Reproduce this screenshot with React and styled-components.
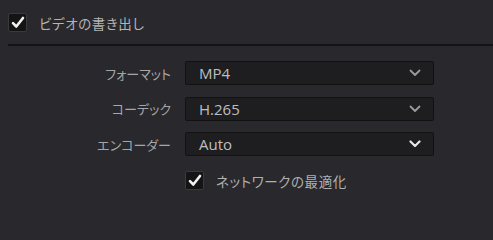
import React from "react";
import styled, { createGlobalStyle } from "styled-components";

const GlobalStyle = createGlobalStyle`
  html, body {
    margin: 0;
    padding: 0;
    background: #28282d;
  }
`;

const Page = styled.div`
  width: 493px;
  height: 205px;
  background: #28282d;
  font-family: "Noto Sans CJK JP", "Noto Sans", sans-serif;
  font-feature-settings: "palt";
  overflow: hidden;
`;

const Header = styled.div`
  display: flex;
  align-items: center;
  gap: 12px;
  height: 44px;
  padding-left: 8px;
  padding-top: 1px;
  box-sizing: border-box;
`;

const Title = styled.span`
  font-size: 13.5px;
  color: #b4b4b6;
  letter-spacing: 0.6px;
`;

const Divider = styled.div`
  margin-left: 8px;
  height: 2px;
  background: #141416;
`;

const Form = styled.div`
  display: grid;
  grid-template-columns: 171px 249px;
  grid-auto-rows: 24px;
  column-gap: 14px;
  row-gap: 11.5px;
  padding-top: 15px;
`;

const Label = styled.div`
  display: flex;
  align-items: center;
  justify-content: flex-end;
  font-size: 13px;
  color: #a6a6a8;
`;

const Select = styled.div`
  display: flex;
  align-items: center;
  justify-content: space-between;
  box-sizing: border-box;
  padding: 0 12px 0 13px;
  background: #1e1e20;
  border: 1px solid #121213;
  border-radius: 2px;
  font-family: "Open Sans", "Liberation Sans", sans-serif;
  font-size: 15px;
  color: #bebec0;
`;

const Chevron = styled.svg`
  width: 12px;
  height: 8px;
  color: ${({ $active }) => ($active ? "#e6e6e8" : "#9a9a9c")};
`;

const CheckRow = styled.div`
  grid-column: 2;
  display: flex;
  align-items: center;
  gap: 12px;
  margin-top: 2px;
`;

const Box = styled.span`
  display: flex;
  align-items: center;
  justify-content: center;
  width: 19px;
  height: 19px;
  background: #141415;
  border: 1px solid #3a3a3d;
  box-sizing: border-box;
  border-radius: 2px;
`;

const CheckText = styled.span`
  font-size: 13.5px;
  color: #b0b0b2;
  letter-spacing: 0.6px;
`;

const Checkbox = () => (
  <Box>
    <svg width="14" height="13" viewBox="0 0 14 13">
      <path
        d="M2 7.2 L5.3 10.5 L12 2"
        fill="none"
        stroke="#f2f2f2"
        strokeWidth="2.6"
        strokeLinecap="round"
        strokeLinejoin="round"
      />
    </svg>
  </Box>
);

const rows = [
  { label: "フォーマット", value: "MP4" },
  { label: "コーデック", value: "H.265" },
  { label: "エンコーダー", value: "Auto", active: true },
];

export default function App() {
  return (
    <Page>
      <GlobalStyle />
      <Header>
        <Checkbox />
        <Title>ビデオの書き出し</Title>
      </Header>
      <Divider />
      <Form>
        {rows.map((r) => (
          <React.Fragment key={r.label}>
            <Label>{r.label}</Label>
            <Select>
              <span>{r.value}</span>
              <Chevron $active={r.active} viewBox="0 0 12 8">
                <path
                  d="M1.5 1.5 L6 6 L10.5 1.5"
                  fill="none"
                  stroke="currentColor"
                  strokeWidth={r.active ? 2.2 : 1.8}
                  strokeLinecap="round"
                  strokeLinejoin="round"
                />
              </Chevron>
            </Select>
          </React.Fragment>
        ))}
        <CheckRow>
          <Checkbox />
          <CheckText>ネットワークの最適化</CheckText>
        </CheckRow>
      </Form>
    </Page>
  );
}
